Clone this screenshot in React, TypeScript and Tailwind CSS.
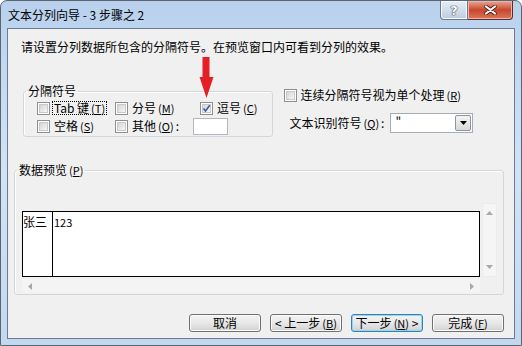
import React from 'react';

const FONT = "font-['Noto_Sans_CJK_SC','Noto_Sans',sans-serif]";

function CheckBox({ checked = false }: { checked?: boolean }) {
  return (
    <span className="flex h-[13px] w-[13px] shrink-0 border border-[#8e8f8f] bg-white p-[1px]">
      <span className="relative flex-1 border border-[#c9c9c9] bg-linear-to-br from-[#d4d4d4] to-[#f7f7f7]">
        {checked && (
          <svg className="absolute -left-[1px] -top-[1px] h-[9px] w-[9px]" viewBox="0 0 9 9">
            <path d="M1.5 4.5 L3.5 7 L7.8 1.2" fill="none" stroke="#3c5a9e" strokeWidth={1.6} />
          </svg>
        )}
      </span>
    </span>
  );
}

function Key({ k }: { k: string }) {
  return (
    <span className="ml-[2px] text-[11px]">
      (<span className="underline">{k}</span>)
    </span>
  );
}

function Option({ label, k, checked, focused, width, colon }: { label: string; k: string; checked?: boolean; focused?: boolean; width?: string; colon?: boolean }) {
  return (
    <div className={`flex items-center gap-[2px] ${width ?? ''}`}>
      <CheckBox checked={checked} />
      <span className={`whitespace-nowrap px-[1px] leading-[12px] ${focused ? 'border border-dotted border-black' : 'border border-transparent'}`}>
        {label}
        <Key k={k} />
        {colon && <span className="ml-[2px]">:</span>}
      </span>
    </div>
  );
}

function WinButton({ children, isDefault = false }: { children: React.ReactNode; isDefault?: boolean }) {
  return (
    <button
      className={`flex h-[18px] w-[72px] items-center justify-center rounded-[3px] border bg-linear-to-b from-[#f3f3f3] via-[#e8e8e8] to-[#d2d2d2] text-[12px] leading-none text-black ${
        isDefault ? 'border-[#3c7fb1] shadow-[inset_0_0_0_1px_#8fd6f7]' : 'border-[#707070] shadow-[inset_0_0_0_1px_#fbfbfb]'
      }`}
    >
      {children}
    </button>
  );
}

function Tri({ dir }: { dir: 'up' | 'down' | 'left' | 'right' }) {
  const pts = {
    up: '0,4 3.5,0 7,4',
    down: '0,0 3.5,4 7,0',
    left: '4,0 0,3.5 4,7',
    right: '0,0 4,3.5 0,7',
  }[dir];
  const vertical = dir === 'up' || dir === 'down';
  return (
    <svg className={vertical ? 'h-[4px] w-[7px]' : 'h-[7px] w-[4px]'} viewBox={vertical ? '0 0 7 4' : '0 0 4 7'}>
      <polygon points={pts} fill="#a8a8a8" />
    </svg>
  );
}

export default function App() {
  return (
    <div className={`relative flex h-[346px] w-[522px] flex-col overflow-hidden rounded-t-[7px] border border-[#5c6670] bg-linear-to-b from-[#b9d1ee] via-[#d3e3f5] to-[#c3d8f0] text-[12px] text-black ${FONT}`}>
      {/* Title bar */}
      <div className="flex h-[27px] shrink-0 justify-between">
        <div className="self-center pl-[7px] leading-[14px] text-[12px]">文本分列向导 - 3 步骤之 2</div>
        <div className="mr-[8px] flex self-start">
          <div className="flex h-[19px] w-[28px] items-center justify-center rounded-bl-[4px] border border-t-0 border-[#6d7888] bg-linear-to-b from-[#e6edf6] via-[#d3deeb] to-[#bccbdf] shadow-[inset_0_0_0_1px_#f4f7fb]">
            <span className="font-['DejaVu_Sans',sans-serif] text-[13px] font-bold leading-none text-white [text-shadow:0_0_1px_#39424f,0_0_1px_#39424f,0_0_1px_#39424f]">?</span>
          </div>
          <div className="flex h-[19px] w-[45px] items-center justify-center rounded-br-[4px] border border-l-0 border-t-0 border-[#6b2a20] bg-linear-to-b from-[#e8a594] via-[#c9452c] to-[#d9785c] shadow-[inset_0_0_0_1px_#eab6a8]">
            <svg className="h-[10px] w-[13px]" viewBox="0 0 13 10">
              <path d="M2 1.5 L11 8.5 M11 1.5 L2 8.5" stroke="#4a1a12" strokeWidth={3.6} strokeLinecap="round" />
              <path d="M2 1.5 L11 8.5 M11 1.5 L2 8.5" stroke="#ffffff" strokeWidth={2.2} strokeLinecap="round" />
            </svg>
          </div>
        </div>
      </div>

      {/* Client area */}
      <div className="mx-[6px] mb-[6px] flex flex-1 flex-col border border-[#6a7c95] bg-[#f0f0f0]">
        <p className="mt-[11px] h-[14px] pl-[13px] leading-[14px]">请设置分列数据所包含的分隔符号。在预览窗口内可看到分列的效果。</p>

        <div className="mt-[30px] flex items-start pl-[15px]">
          <fieldset className="w-[246px] rounded-[3px] border border-[#d0d8de] px-[13px] pb-[1px] shadow-[inset_1px_1px_0_#ffffff]">
            <legend className="-ml-[11px] px-[2px] leading-[14px]">分隔符号</legend>
            <div className="mt-[3px] flex h-[14px] items-center">
              <Option label="Tab 键" k="T" focused width="w-[78px]" />
              <Option label="分号" k="M" width="w-[85px]" />
              <Option label="逗号" k="C" checked />
            </div>
            <div className="mt-[2px] flex h-[18px] items-center">
              <Option label="空格" k="S" width="w-[78px]" />
              <Option label="其他" k="O" colon width="w-[78px]" />
              <div className="h-[17px] w-[35px] border border-[#b3b6bc] bg-white" />
            </div>
          </fieldset>

          <div className="ml-[11px] flex flex-col pt-[4px]">
            <div className="flex h-[14px] items-center gap-[3px]">
              <CheckBox />
              <span className="leading-[14px]">
                连续分隔符号视为单个处理
                <Key k="R" />
              </span>
            </div>
            <div className="mt-[11px] flex h-[20px] items-center pl-[5px]">
              <span className="w-[101px] whitespace-nowrap leading-[14px]">
                文本识别符号
                <Key k="Q" />
                <span className="ml-[2px]">:</span>
              </span>
              <div className="flex h-[20px] w-[83px] items-center justify-between border border-[#a5acb5] bg-white pl-[4px] pr-[1px]">
                <span className="self-start pt-[1px] leading-[12px]">"</span>
                <div className="flex h-[16px] w-[16px] items-center justify-center rounded-[2px] border border-[#8d97a3] bg-linear-to-b from-[#f4f4f4] to-[#d9d9d9]">
                  <svg className="h-[4px] w-[7px]" viewBox="0 0 7 4">
                    <polygon points="0,0 7,0 3.5,4" fill="#000" />
                  </svg>
                </div>
              </div>
            </div>
          </div>
        </div>

        {/* Data preview */}
        <fieldset className="ml-[6px] mt-[26px] w-[490px] rounded-[3px] border border-[#d0d8de] pb-[1px] pl-[7px] pr-[6px] shadow-[inset_1px_1px_0_#ffffff]">
          <legend className="-ml-[5px] px-[2px] leading-[14px]">
            数据预览
            <Key k="P" />
          </legend>
          <div className="mt-[26px] flex items-start gap-[2px]">
            <div className="flex w-[458px] flex-col">
              <div className="mt-[8px] flex h-[66px] border border-black bg-white">
                <div className="w-[30px] shrink-0 border-r border-black pt-[3px] leading-[14px]">张三</div>
                <div className="pl-[1px] pt-[3px] text-[11px] leading-[14px]">123</div>
              </div>
              <div className="mt-[2px] flex h-[14px] items-center justify-between bg-[#f4f4f4] px-[6px]">
                <Tri dir="left" />
                <Tri dir="right" />
              </div>
            </div>
            <div className="flex h-[74px] w-[15px] flex-col items-center justify-between border border-[#ececec] bg-[#f5f5f5] py-[7px]">
              <Tri dir="up" />
              <Tri dir="down" />
            </div>
          </div>
        </fieldset>

        {/* Buttons */}
        <div className="mt-[19px] flex justify-end gap-[9px] pr-[10px]">
          <WinButton>取消</WinButton>
          <WinButton>
            &lt; 上一步
            <Key k="B" />
          </WinButton>
          <WinButton isDefault>
            下一步
            <Key k="N" />
            &nbsp;&gt;
          </WinButton>
          <WinButton>
            完成
            <Key k="F" />
          </WinButton>
        </div>
      </div>

      {/* Red annotation arrow */}
      <svg className="absolute left-[198px] top-[56px] h-[42px] w-[15px]" viewBox="0 0 15 42">
        <polygon points="3.5,0 10.5,0 10.5,20 14.5,20 7.5,41 0.5,20 3.5,20" fill="#e51f26" />
      </svg>
    </div>
  );
}
